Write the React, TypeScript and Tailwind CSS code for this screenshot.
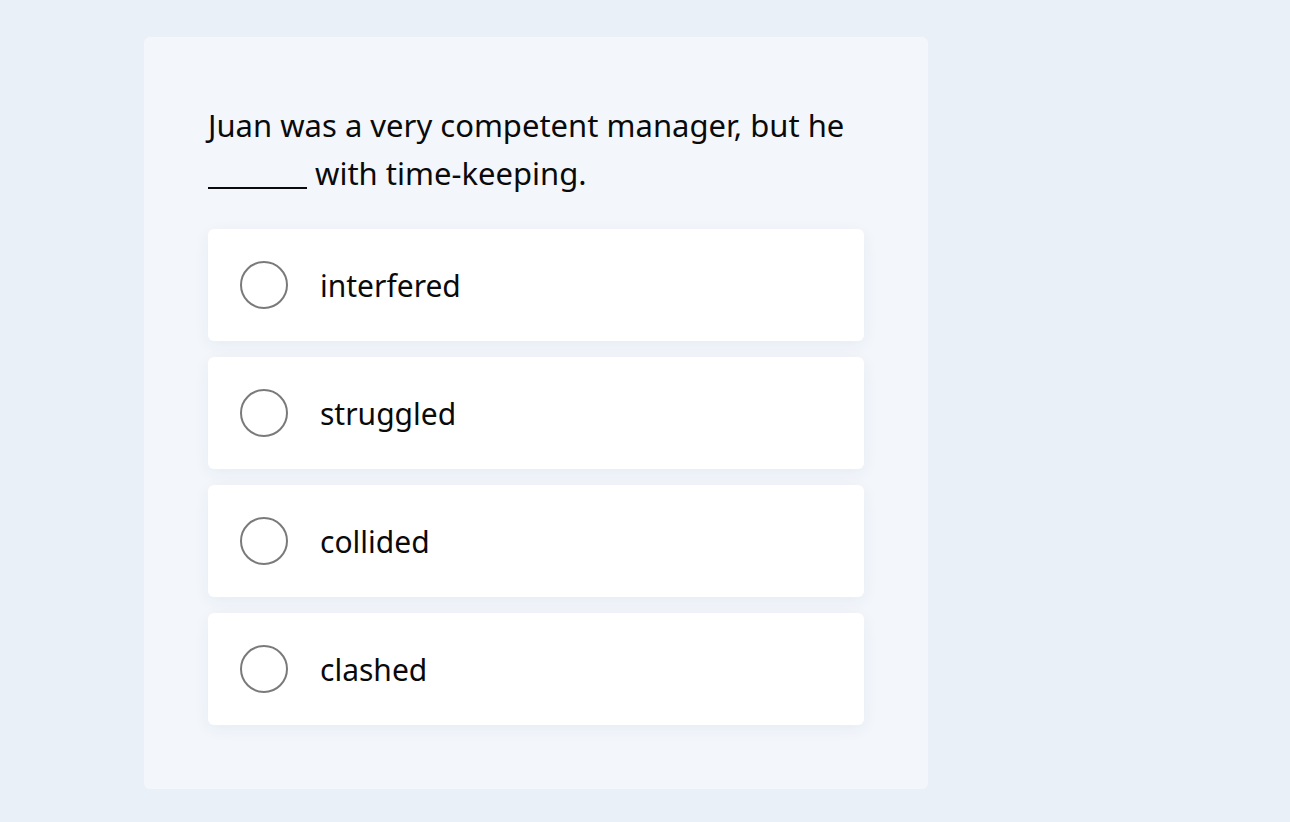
import React, { useState } from 'react';

const options = ['interfered', 'struggled', 'collided', 'clashed'];

export default function App() {
  const [selected, setSelected] = useState<number | null>(null);

  return (
    <div className="min-h-screen w-full bg-[#e9f0f8] pt-[37px] pl-[144px] font-['Noto_Sans','Open_Sans',sans-serif] text-[#0a0a0a]">
      <div className="w-[784px] rounded-md bg-[#f3f7fc] px-16 pt-16 pb-16">
        <p className="text-[31px] leading-[48px]">
          Juan was a very competent manager, but he{' '}
          <span className="inline-block h-0 w-[99px] border-b-2 border-[#0a0a0a] align-[-4px]" /> with
          time-keeping.
        </p>
        <div className="mt-8 flex flex-col gap-4">
          {options.map((opt, i) => (
            <button
              key={opt}
              type="button"
              onClick={() => setSelected(i)}
              className="flex h-[112px] w-full items-center rounded-md bg-white pl-8 text-left shadow-[0_4px_16px_rgba(30,50,90,0.06)]"
            >
              <span className="flex h-12 w-12 items-center justify-center rounded-full border-2 border-[#7a7a7a]">
                {selected === i && <span className="h-6 w-6 rounded-full bg-[#7a7a7a]" />}
              </span>
              <span className="ml-8 text-[30px]">{opt}</span>
            </button>
          ))}
        </div>
      </div>
    </div>
  );
}
